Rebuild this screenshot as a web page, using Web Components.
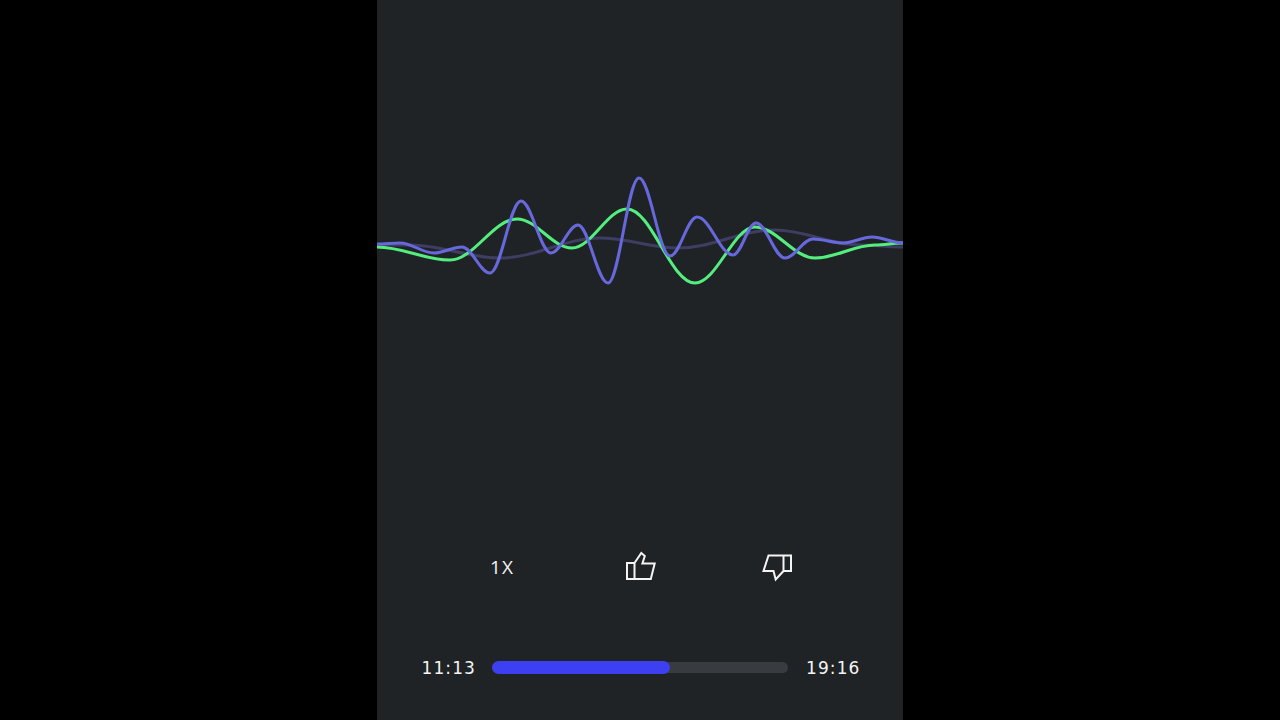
<!DOCTYPE html>
<html>
<head>
<meta charset="utf-8">
<title>Player</title>
<style>
html, body { margin: 0; height: 100%; background: #000; }
</style>
</head>
<body>
<player-screen>
  <wave-view slot="wave"></wave-view>
  <control-row slot="controls"></control-row>
  <progress-row slot="progress" current="11:13" total="19:16" percent="60"></progress-row>
</player-screen>

<script>
/* global HTMLElement */

const screenTemplate = document.createElement('template')
screenTemplate.innerHTML = `
<style>
:host {
  display: flex;
  justify-content: center;
  width: 100%;
  height: 720px;
  background: #000;
  font-family: "Open Sans", "Liberation Sans", sans-serif;
  color: #fff;
}
.phone {
  width: 526px;
  height: 720px;
  background: #202326;
  display: flex;
  flex-direction: column;
  overflow: hidden;
}
</style>
<div class="phone">
  <slot name="wave"></slot>
  <slot name="controls"></slot>
  <slot name="progress"></slot>
</div>
`

class PlayerScreen extends HTMLElement {
  constructor () {
    super()
    this.attachShadow({ mode: 'open' }).appendChild(screenTemplate.content.cloneNode(true))
  }
}

// Peaks and troughs of each line, in page coordinates (x is offset by 377 later)
const BLUE = [[377, 244], [400, 243], [434, 253], [462, 247], [490, 273], [521, 201], [551, 253], [578, 225], [608, 283], [639, 178], [670, 256], [697, 217], [733, 255], [756, 223], [785, 258], [813, 239], [843, 243], [872, 237], [903, 243]]
const GREEN = [[377, 247], [450, 260], [517, 219], [572, 248], [627, 209], [695, 283], [755, 227], [815, 258], [875, 245], [903, 243]]
const FAINT = [[377, 245], [410, 245], [500, 258], [600, 238], [678, 248], [775, 230], [860, 245], [903, 247]]

/**
 * Turns a list of extremes into a path with flat tangents at each one.
 * A handle of 0.36 of the span follows a sine closely.
 */
function wavePath (points) {
  let d = `M${points[0][0] - 377} ${points[0][1]}`
  for (let i = 1; i < points.length; i++) {
    const [x0, y0] = points[i - 1]
    const [x1, y1] = points[i]
    const handle = (x1 - x0) * 0.36
    d += ` C${x0 - 377 + handle} ${y0} ${x1 - 377 - handle} ${y1} ${x1 - 377} ${y1}`
  }
  return d
}

const waveTemplate = document.createElement('template')
waveTemplate.innerHTML = `
<style>
:host {
  display: block;
  height: 545px;
}
svg {
  display: block;
  width: 526px;
  height: 545px;
}
path {
  fill: none;
  stroke-width: 3;
  stroke-linecap: round;
}
.faint { stroke: #3e3d62; }
.green { stroke: #54ee7f; }
.blue { stroke: #6668dc; }
</style>
<svg viewBox="0 0 526 545" aria-hidden="true">
  <path class="faint"></path>
  <path class="green"></path>
  <path class="blue"></path>
</svg>
`

class WaveView extends HTMLElement {
  constructor () {
    super()
    this.attachShadow({ mode: 'open' }).appendChild(waveTemplate.content.cloneNode(true))
    this.shadowRoot.querySelector('.faint').setAttribute('d', wavePath(FAINT))
    this.shadowRoot.querySelector('.green').setAttribute('d', wavePath(GREEN))
    this.shadowRoot.querySelector('.blue').setAttribute('d', wavePath(BLUE))
  }
}

const controlsTemplate = document.createElement('template')
controlsTemplate.innerHTML = `
<style>
:host {
  display: flex;
  justify-content: center;
  align-items: center;
  height: 44px;
}
.item {
  width: 137.5px;
  display: flex;
  justify-content: center;
  align-items: center;
}
.speed {
  font-size: 19px;
  letter-spacing: 1px;
  margin-right: 1px;
  color: #f4f4f4;
}
svg {
  display: block;
  width: 32px;
  height: 32px;
  fill: none;
  stroke: #f4f4f4;
  stroke-width: 2;
  stroke-linejoin: miter;
}
.up { margin-left: 1px; }
</style>
<div class="item"><span class="speed">1X</span></div>
<div class="item">
  <svg class="up" viewBox="0 0 32 32" aria-hidden="true">
    <path d="M2 12H9.500V28H2ZM9.500 12L16.300 2L19.800 5L17.400 12.500H29.700L25.800 28H9.500"/>
  </svg>
</div>
<div class="item">
  <svg viewBox="0 0 32 32" aria-hidden="true">
    <path d="M29 4.500H21.500V20H29ZM21.500 4.500H6.500L1.500 20H11.500L13.700 28.500L21.500 20"/>
  </svg>
</div>
`

class ControlRow extends HTMLElement {
  constructor () {
    super()
    this.attachShadow({ mode: 'open' }).appendChild(controlsTemplate.content.cloneNode(true))
  }
}

const progressTemplate = document.createElement('template')
progressTemplate.innerHTML = `
<style>
:host {
  display: flex;
  justify-content: center;
  align-items: center;
  gap: 16px;
  height: 34px;
  margin-top: 62px;
  padding-left: 2px;
}
.time {
  font-family: "DejaVu Sans", sans-serif;
  font-size: 17px;
  letter-spacing: 1.1px;
  color: #f4f4f4;
}
.total { margin-left: 2px; }
.track {
  width: 296px;
  height: 11px;
  margin-bottom: 2px;
  border-radius: 6px;
  background: #383b3f;
}
.fill {
  height: 13px;
  margin-top: -1px;
  border-radius: 7px;
  background: #3d40f0;
}
</style>
<span class="time current"></span>
<div class="track"><div class="fill"></div></div>
<span class="time total"></span>
`

class ProgressRow extends HTMLElement {
  constructor () {
    super()
    this.attachShadow({ mode: 'open' }).appendChild(progressTemplate.content.cloneNode(true))
    this.shadowRoot.querySelector('.current').textContent = this.getAttribute('current')
    this.shadowRoot.querySelector('.total').textContent = this.getAttribute('total')
    this.shadowRoot.querySelector('.fill').style.width = this.getAttribute('percent') + '%'
  }
}

window.customElements.define('player-screen', PlayerScreen)
window.customElements.define('wave-view', WaveView)
window.customElements.define('control-row', ControlRow)
window.customElements.define('progress-row', ProgressRow)
</script>
</body>
</html>
